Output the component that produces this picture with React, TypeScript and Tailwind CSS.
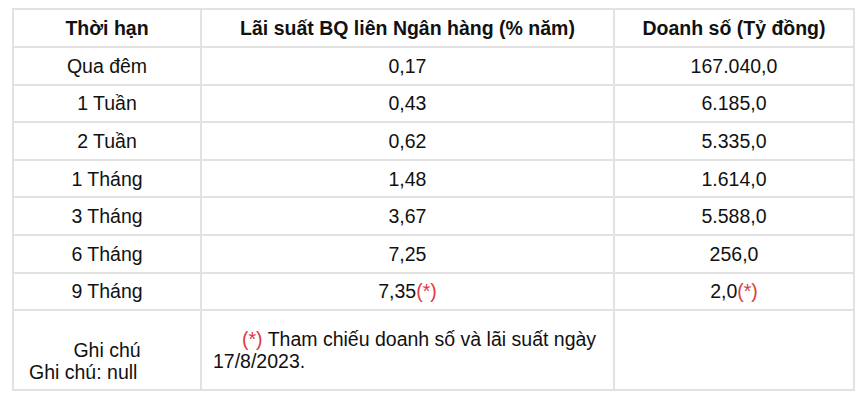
import React from 'react';

// Lãi suất bình quân liên ngân hàng theo kỳ hạn
const ROWS = [
  { term: 'Qua đêm', rate: '0,17', volume: '167.040,0' },
  { term: '1 Tuần', rate: '0,43', volume: '6.185,0' },
  { term: '2 Tuần', rate: '0,62', volume: '5.335,0' },
  { term: '1 Tháng', rate: '1,48', volume: '1.614,0' },
  { term: '3 Tháng', rate: '3,67', volume: '5.588,0' },
  { term: '6 Tháng', rate: '7,25', volume: '256,0' },
  { term: '9 Tháng', rate: '7,35', volume: '2,0', ref: true },
];

const Star = () => <span className="text-[#e0393e]">(*)</span>;

export default function App() {
  return (
    <div className="w-[864px] h-[403px] bg-white pt-[8px] pl-[12px] font-['Liberation_Sans',Arial,sans-serif] text-[19.5px] text-[#111]">
      <table className="w-[841px] border-collapse table-fixed">
        <colgroup>
          <col className="w-[188px]" />
          <col className="w-[413px]" />
          <col className="w-[240px]" />
        </colgroup>
        <thead>
          <tr className="h-[38px]">
            <th className="border-2 border-[#e2e2e2] font-bold text-center leading-[22px]">Thời hạn</th>
            <th className="border-2 border-[#e2e2e2] font-bold text-center leading-[22px]">Lãi suất BQ liên Ngân hàng (% năm)</th>
            <th className="border-2 border-[#e2e2e2] font-bold text-center leading-[22px]">Doanh số (Tỷ đồng)</th>
          </tr>
        </thead>
        <tbody>
          {ROWS.map((row) => (
            <tr key={row.term} className="h-[37.6px]">
              <td className="border-2 border-[#e2e2e2] text-center leading-[22px]">{row.term}</td>
              <td className="border-2 border-[#e2e2e2] text-center leading-[22px]">
                {row.rate}
                {row.ref && <Star />}
              </td>
              <td className="border-2 border-[#e2e2e2] text-center leading-[22px]">
                {row.volume}
                {row.ref && <Star />}
              </td>
            </tr>
          ))}
          <tr className="h-[80px]">
            <td className="border-2 border-[#e2e2e2] leading-[22px]">
              <div className="text-center">&nbsp;</div>
              <div className="text-center">Ghi chú</div>
              <div className="pl-[15px]">Ghi chú: null</div>
            </td>
            <td className="border-2 border-[#e2e2e2] leading-[22px] px-[11px]">
              <p className="indent-[29px]">
                <Star />
                <span> Tham chiếu doanh số và lãi suất ngày</span>
                <br />
                <span>17/8/2023.</span>
              </p>
            </td>
            <td className="border-2 border-[#e2e2e2]"></td>
          </tr>
        </tbody>
      </table>
    </div>
  );
}
